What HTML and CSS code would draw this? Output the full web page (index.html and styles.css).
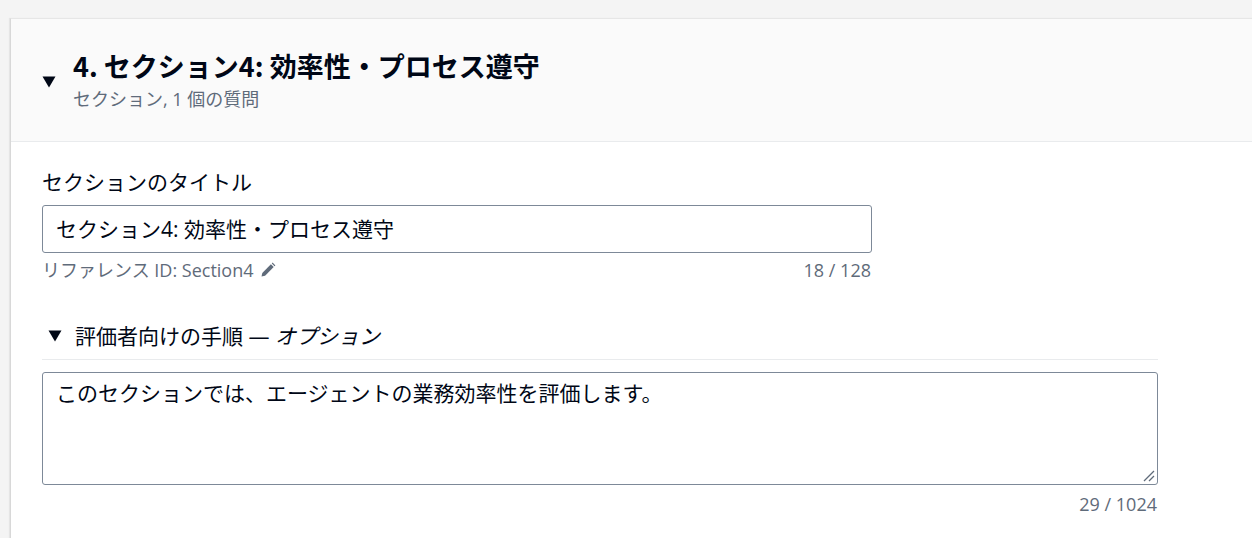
FILE: index.html
```html
<!DOCTYPE html>
<html lang="ja">
<head>
<meta charset="utf-8">
<title>セクション4</title>
<link rel="stylesheet" href="styles.css">
</head>
<body>
<div class="page">
  <section class="card">
    <header class="card-header">
      <svg class="caret caret-lg" viewBox="0 0 14 12" aria-hidden="true"><path d="M0.5 0.5 H13.5 L7 11.5 Z" fill="#000716"/></svg>
      <div class="header-text">
        <h2 class="title">4. セクション4: 効率性・プロセス遵守</h2>
        <div class="subtitle">セクション, 1 個の質問</div>
      </div>
    </header>
    <div class="card-body">
      <div class="field field-title">
        <label class="label" for="t">セクションのタイトル</label>
        <div class="input">セクション4: 効率性・プロセス遵守</div>
        <div class="meta">
          <span class="ref">リファレンス ID: Section4
            <svg class="pencil" viewBox="0 0 16 16" aria-hidden="true"><path d="M1.5 14.5 L2.3 10.9 L10.9 2.3 L13.7 5.1 L5.1 13.7 Z" fill="#5f6b7a"/><path d="M11.8 1.4 L12.6 0.6 L15.4 3.4 L14.6 4.2 Z" fill="#5f6b7a"/></svg>
          </span>
          <span class="count">18 / 128</span>
        </div>
      </div>
      <div class="field field-notes">
        <div class="expand-head">
          <svg class="caret caret-sm" viewBox="0 0 14 12" aria-hidden="true"><path d="M0.5 0.5 H13.5 L7 11.5 Z" fill="#000716"/></svg>
          <span>評価者向けの手順 <span class="dash">—</span> <em>オプション</em></span>
        </div>
        <div class="textarea">このセクションでは、エージェントの業務効率性を評価します。
          <svg class="grip" viewBox="0 0 12 12" aria-hidden="true"><path d="M1 11 L11 1 M6 11 L11 6" stroke="#5f6b7a" stroke-width="1.3" fill="none"/></svg>
        </div>
        <div class="meta meta-end">
          <span class="count">29 / 1024</span>
        </div>
      </div>
    </div>
  </section>
</div>
</body>
</html>
```

FILE: styles.css
```css
html, body {
  margin: 0;
  padding: 0;
  overflow: hidden;
  background: #f4f4f4;
}
body {
  font-family: "Open Sans", "Noto Sans CJK JP", sans-serif;
  color: #000716;
}
.page {
  padding: 18px 0 0 10px;
}
.card {
  background: #ffffff;
  border-top: 1px solid #e6e6e6;
  border-left: 1px solid #d8d8d8;
  box-shadow: -1px 0 1px rgba(0,0,0,0.06);
  margin-right: -20px;
  min-height: 520px;
}
.card-header {
  background: #fafafa;
  border-bottom: 1px solid #e9ebed;
  display: flex;
  align-items: center;
  padding: 30px 0 30px 31px;
  gap: 17px;
}
.caret-lg {
  width: 14px;
  height: 12px;
  flex: none;
  margin-top: 3px;
}
.title {
  margin: 0;
  font-size: 27px;
  line-height: 33px;
  font-weight: 700;
  color: #000716;
  font-family: "Noto Sans CJK JP", sans-serif;
}
.subtitle {
  font-size: 18px;
  line-height: 24px;
  color: #5f6b7a;
  margin-top: 5px;
}
.card-body {
  padding: 25px 0 20px 31px;
  width: 1116px;
}
.field-title {
  width: 830px;
}
.label {
  display: block;
  font-size: 21px;
  line-height: 30px;
  margin-bottom: 8px;
}
.input {
  border: 1px solid #7d8998;
  border-radius: 3px;
  padding: 8px 13px;
  font-size: 21px;
  line-height: 30px;
}
.meta {
  display: flex;
  justify-content: space-between;
  font-size: 18px;
  line-height: 24px;
  color: #5f6b7a;
  margin-top: 5px;
}
.meta-end {
  justify-content: flex-end;
  margin-top: 7px;
}
.ref {
  display: inline-flex;
  align-items: center;
  gap: 6px;
}
.pencil {
  width: 16px;
  height: 16px;
}
.count {
  padding-right: 1px;
}
.field-notes {
  margin-top: 39px;
}
.expand-head {
  display: flex;
  align-items: center;
  gap: 13px;
  font-size: 21px;
  line-height: 30px;
  padding: 0 0 8px 6px;
  border-bottom: 1px solid #e9ebed;
  margin-bottom: 12px;
}
.expand-head em {
  font-style: italic;
}
.caret-sm {
  width: 14px;
  height: 12px;
  flex: none;
}
.textarea {
  position: relative;
  border: 1px solid #7d8998;
  border-radius: 3px;
  box-sizing: border-box;
  height: 113px;
  padding: 5px 13px;
  font-size: 21px;
  line-height: 30px;
}
.grip {
  position: absolute;
  right: 2px;
  bottom: 2px;
  width: 12px;
  height: 12px;
}
```
